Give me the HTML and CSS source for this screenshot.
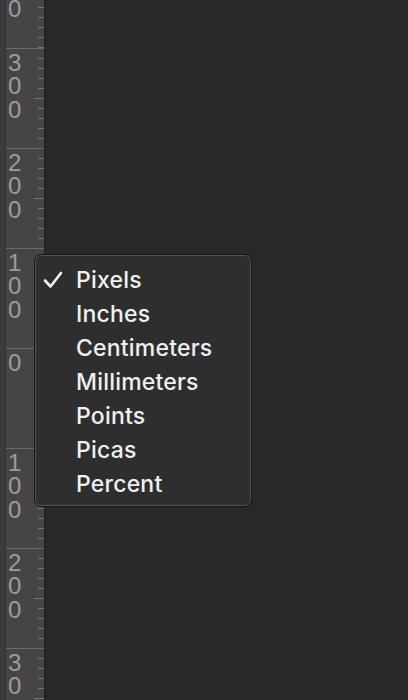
FILE: index.html
```html
<!DOCTYPE html>
<html>
<head>
<meta charset="utf-8">
<link rel="stylesheet" href="styles.css">
</head>
<body>
<div class="app">
  <div class="ruler">
    <div class="seg first"><div class="label">0</div></div>
    <div class="seg"><div class="label">300</div></div>
    <div class="seg"><div class="label">200</div></div>
    <div class="seg"><div class="label">100</div></div>
    <div class="seg"><div class="label">0</div></div>
    <div class="seg"><div class="label">100</div></div>
    <div class="seg"><div class="label">200</div></div>
    <div class="seg last"><div class="label">30</div></div>
  </div>
  <div class="canvas"></div>
</div>
<div class="menu">
  <div class="item"><span class="check"><svg width="20" height="18" viewBox="0 0 20 18"><path d="M2 9.5 L7.5 15.5 L18 2" fill="none" stroke="#f2f2f2" stroke-width="2.6" stroke-linecap="round" stroke-linejoin="round"/></svg></span><span class="txt">Pixels</span></div>
  <div class="item"><span class="check"></span><span class="txt">Inches</span></div>
  <div class="item"><span class="check"></span><span class="txt">Centimeters</span></div>
  <div class="item"><span class="check"></span><span class="txt">Millimeters</span></div>
  <div class="item"><span class="check"></span><span class="txt">Points</span></div>
  <div class="item"><span class="check"></span><span class="txt">Picas</span></div>
  <div class="item"><span class="check"></span><span class="txt">Percent</span></div>
</div>
</body>
</html>
```
FILE: styles.css
```css
html, body {
  margin: 0;
  padding: 0;
  background: #282828;
  height: 100%;
  overflow: hidden;
}
.app {
  display: flex;
  height: 700px;
}
.ruler {
  width: 45px;
  flex: none;
  background: #454545;
  border-left: 5px solid #3b3b3b;
  box-sizing: border-box;
  border-right: 1px solid #1f1f1f;
  box-shadow: inset 1px 0 0 #333333;
  display: flex;
  flex-direction: column;
  overflow: hidden;
}
.seg {
  flex: none;
  height: 100px;
  box-sizing: border-box;
  margin-left: 1px;
  border-top: 1px solid #6a6a6a;
  background-image:
    linear-gradient(#757575, #757575),
    repeating-linear-gradient(to bottom, transparent 0, transparent 9px, #757575 9px, #757575 10px);
  background-size: 10px 1px, 6px 100%;
  background-position: right 0 top 49px, right 0 top 0;
  background-repeat: no-repeat, no-repeat;
}
.seg.first {
  height: 47.5px;
  border-top: none;
  background-image:
    repeating-linear-gradient(to bottom, transparent 0, transparent 7px, #757575 7px, #757575 8px, transparent 8px, transparent 10px);
  background-size: 6px 100%;
  background-position: right 0 top 0;
}
.seg.first .label {
  padding-top: 0;
  line-height: 17px;
  height: 17px;
  overflow: visible;
}
.seg.last {
  height: 53px;
}
.label {
  width: 14px;
  word-break: break-all;
  padding-top: 2px;
  margin-left: 2px;
  font-family: "Liberation Sans", Arial, sans-serif;
  font-size: 24px;
  line-height: 23.5px;
  color: #9c9c9c;
}
.canvas {
  flex: 1;
  background: #282828;
}
.menu {
  position: absolute;
  left: 34px;
  top: 254px;
  width: 218px;
  height: 253px;
  box-sizing: border-box;
  background: #2e2e2e;
  border: 1px solid #141414;
  border-radius: 7px;
  box-shadow: inset 0 0 0 1px #555555;
  padding: 8px 0 5px 0;
  display: flex;
  flex-direction: column;
}
.item {
  height: 34px;
  flex: none;
  display: flex;
  align-items: center;
  font-family: Inter, "Noto Sans", sans-serif;
  font-size: 23px;
  font-weight: 500;
  color: #f0f0f0;
}
.check {
  width: 41px;
  flex: none;
  display: flex;
  padding-left: 8px;
  box-sizing: border-box;
}
.txt {
  letter-spacing: 0.2px;
}
```
